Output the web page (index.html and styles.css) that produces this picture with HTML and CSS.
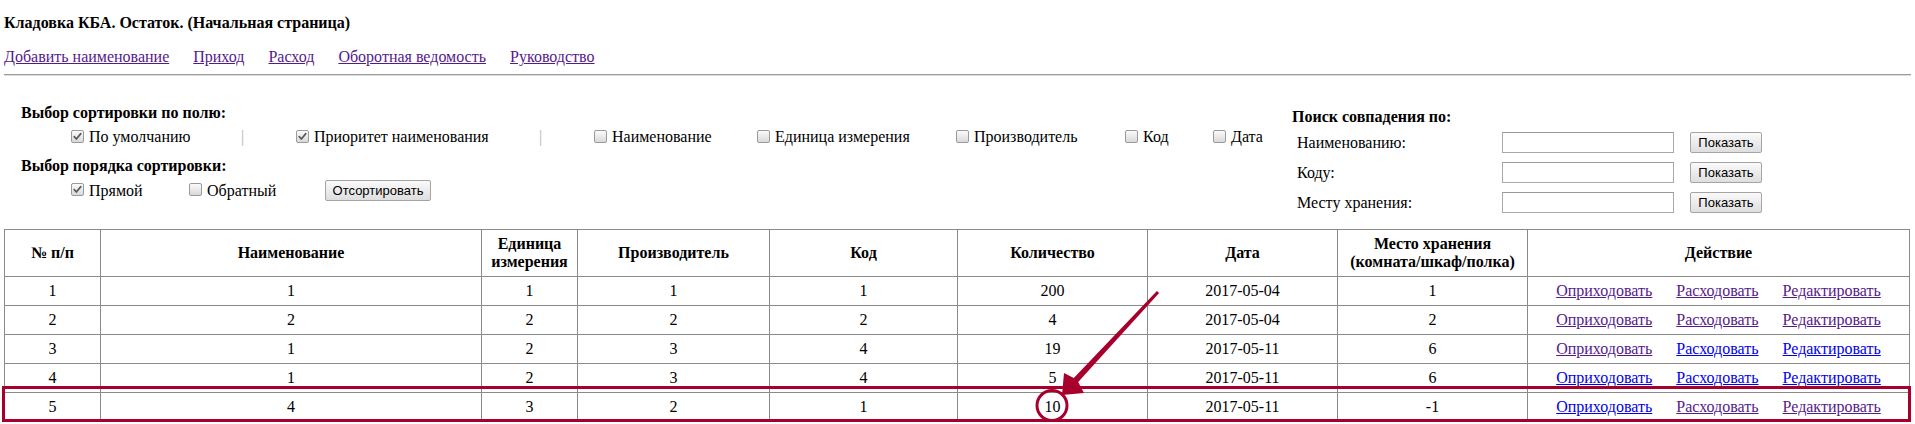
FILE: index.html
```html
<!DOCTYPE html>
<html lang="ru">
<head>
<meta charset="utf-8">
<title>Кладовка КБА</title>
<link rel="stylesheet" href="styles.css">
</head>
<body>
<div class="page">
  <div class="title">Кладовка КБА. Остаток. (Начальная страница)</div>
  <nav class="nav">
    <a class="v" href="#">Добавить наименование</a>
    <a class="v" href="#">Приход</a>
    <a class="v" href="#">Расход</a>
    <a class="v" href="#">Оборотная ведомость</a>
    <a class="v" href="#">Руководство</a>
  </nav>
  <div class="rule"></div>

  <div class="controls">
    <div class="sort">
      <div class="heading">Выбор сортировки по полю:</div>
      <div class="fields">
        <span class="opt"><span class="cb"><svg viewBox="0 0 11 11"><path d="M2.2 5.6 L4.4 8 L8.8 2.6"/></svg></span>По умолчанию</span>
        <span class="sep">|</span>
        <span class="opt"><span class="cb"><svg viewBox="0 0 11 11"><path d="M2.2 5.6 L4.4 8 L8.8 2.6"/></svg></span>Приоритет наименования</span>
        <span class="sep">|</span>
        <span class="opt"><span class="cb"></span>Наименование</span>
        <span class="opt"><span class="cb"></span>Единица измерения</span>
        <span class="opt"><span class="cb"></span>Производитель</span>
        <span class="opt"><span class="cb"></span>Код</span>
        <span class="opt"><span class="cb"></span>Дата</span>
      </div>
      <div class="heading heading2">Выбор порядка сортировки:</div>
      <div class="order">
        <span class="opt"><span class="cb"><svg viewBox="0 0 11 11"><path d="M2.2 5.6 L4.4 8 L8.8 2.6"/></svg></span>Прямой</span>
        <span class="opt"><span class="cb"></span>Обратный</span>
        <button class="btn btn-sort" type="button">Отсортировать</button>
      </div>
    </div>

    <div class="search">
      <div class="heading">Поиск совпадения по:</div>
      <div class="search-grid">
        <span class="lbl">Наименованию:</span>
        <input class="inp" type="text">
        <button class="btn btn-show" type="button">Показать</button>
        <span class="lbl">Коду:</span>
        <input class="inp" type="text">
        <button class="btn btn-show" type="button">Показать</button>
        <span class="lbl">Месту хранения:</span>
        <input class="inp" type="text">
        <button class="btn btn-show" type="button">Показать</button>
      </div>
    </div>
  </div>

  <table class="stock">
    <colgroup>
      <col class="c-num"><col class="c-name"><col class="c-unit"><col class="c-maker"><col class="c-code"><col class="c-qty"><col class="c-date"><col class="c-place"><col class="c-act">
    </colgroup>
    <thead>
      <tr>
        <th>№ п/п</th>
        <th>Наименование</th>
        <th>Единица измерения</th>
        <th>Производитель</th>
        <th>Код</th>
        <th>Количество</th>
        <th>Дата</th>
        <th>Место хранения (комната/шкаф/полка)</th>
        <th>Действие</th>
      </tr>
    </thead>
    <tbody>
      <tr>
        <td>1</td><td>1</td><td>1</td><td>1</td><td>1</td><td>200</td><td>2017-05-04</td><td>1</td>
        <td><div class="acts"><a class="v" href="#">Оприходовать</a><a class="v" href="#">Расходовать</a><a class="v" href="#">Редактировать</a></div></td>
      </tr>
      <tr>
        <td>2</td><td>2</td><td>2</td><td>2</td><td>2</td><td>4</td><td>2017-05-04</td><td>2</td>
        <td><div class="acts"><a class="v" href="#">Оприходовать</a><a class="v" href="#">Расходовать</a><a class="v" href="#">Редактировать</a></div></td>
      </tr>
      <tr>
        <td>3</td><td>1</td><td>2</td><td>3</td><td>4</td><td>19</td><td>2017-05-11</td><td>6</td>
        <td><div class="acts"><a class="v" href="#">Оприходовать</a><a class="u" href="#">Расходовать</a><a class="u" href="#">Редактировать</a></div></td>
      </tr>
      <tr>
        <td>4</td><td>1</td><td>2</td><td>3</td><td>4</td><td>5</td><td>2017-05-11</td><td>6</td>
        <td><div class="acts"><a class="u" href="#">Оприходовать</a><a class="u" href="#">Расходовать</a><a class="u" href="#">Редактировать</a></div></td>
      </tr>
      <tr>
        <td>5</td><td>4</td><td>3</td><td>2</td><td>1</td><td>10</td><td>2017-05-11</td><td>-1</td>
        <td><div class="acts"><a class="u" href="#">Оприходовать</a><a class="v" href="#">Расходовать</a><a class="v" href="#">Редактировать</a></div></td>
      </tr>
    </tbody>
  </table>
</div>

<svg class="annot" width="1915" height="424" viewBox="0 0 1915 424">
  <rect x="3.5" y="387.5" width="1906" height="33" fill="none" stroke="#a8002c" stroke-width="3"/>
  <circle cx="1052" cy="405.5" r="15" fill="none" stroke="#a8002c" stroke-width="3"/>
  <polygon fill="#a8002c" points="1156.9,291 1159.1,293 1078.2,382.1 1084,393 1062,395 1064,373 1073.8,377.9"/>
</svg>
</body>
</html>
```

FILE: styles.css
```css
html, body {
  margin: 0;
  padding: 0;
  background: #ffffff;
}

body {
  position: relative;
  width: 1915px;
  height: 424px;
  overflow: hidden;
  font-family: "Liberation Serif", "Times New Roman", serif;
  font-size: 16px;
  color: #000000;
}

.page {
  padding: 14px 4px 0 4px;
}

a {
  text-decoration: underline;
}

a.v {
  color: #551a8b;
}

a.u {
  color: #0000ee;
}

.title {
  font-weight: bold;
  line-height: 18px;
  height: 18px;
}

.nav {
  margin-top: 16px;
  display: flex;
  gap: 24px;
  line-height: 18px;
  height: 18px;
}

.rule {
  margin-top: 8px;
  height: 0;
  width: 1907px;
  border-top: 1px solid #9c9c9c;
  border-bottom: 1px solid #dcdcdc;
}

.controls {
  margin-top: 28px;
  display: flex;
  align-items: flex-start;
}

.sort {
  width: 1288px;
  padding-left: 17px;
  box-sizing: border-box;
}

.heading {
  font-weight: bold;
  line-height: 18px;
  height: 18px;
}

.heading2 {
  margin-top: 11px;
}

.fields {
  margin-top: 6px;
  padding-left: 50px;
  display: grid;
  grid-template-columns: 170px 55px 243px 55px 163px 199px 169px 88px auto;
  align-items: center;
  line-height: 18px;
  height: 18px;
}

.order {
  margin-top: 5px;
  padding-left: 50px;
  display: grid;
  grid-template-columns: 118px 136px auto;
  align-items: center;
  height: 21px;
  line-height: 18px;
}

.opt {
  display: flex;
  align-items: center;
  white-space: nowrap;
}

.cb {
  display: inline-block;
  flex: none;
  width: 13px;
  height: 13px;
  box-sizing: border-box;
  margin-right: 5px;
  border: 1px solid #9a9a9a;
  border-radius: 2px;
  background: linear-gradient(#fbfbfb, #d9d9d9);
  position: relative;
  top: -1px;
}

.cb svg {
  display: block;
  width: 11px;
  height: 11px;
}

.cb svg path {
  fill: none;
  stroke: #5a5a5a;
  stroke-width: 1.7;
  stroke-linecap: round;
  stroke-linejoin: round;
}

.sep {
  color: #b4b4b4;
}

.btn {
  height: 21px;
  box-sizing: border-box;
  padding: 0;
  margin: 0;
  font-family: "Liberation Sans", Arial, sans-serif;
  font-size: 13px;
  color: #000000;
  border: 1px solid #a4a4a4;
  border-radius: 2px;
  background: linear-gradient(#fafafa, #dedede);
  justify-self: start;
}

.btn-sort {
  width: 106px;
}

.btn-show {
  width: 72px;
}

.search {
  padding-top: 4px;
}

.search .heading {
  height: 18px;
}

.search-grid {
  margin-top: 6px;
  padding-left: 5px;
  display: grid;
  grid-template-columns: 189px 172px 72px;
  column-gap: 16px;
  row-gap: 9px;
  align-items: center;
}

.lbl {
  line-height: 18px;
}

.inp {
  width: 172px;
  height: 21px;
  box-sizing: border-box;
  margin: 0;
  padding: 0 3px;
  border: 1px solid #a9a9a9;
  border-top-color: #9a9a9a;
  background: #ffffff;
  font-family: "Liberation Serif", serif;
  font-size: 14px;
}

.stock {
  margin-top: 16px;
  width: 1905px;
  table-layout: fixed;
  border-collapse: collapse;
}

.stock th,
.stock td {
  border: 1px solid #8a8a8a;
  padding: 0 2px;
  text-align: center;
  vertical-align: middle;
  line-height: 18px;
}

.stock th {
  height: 46px;
  font-weight: bold;
}

.stock td {
  height: 28px;
}

.c-num { width: 96px; }
.c-name { width: 381px; }
.c-unit { width: 96px; }
.c-maker { width: 192px; }
.c-code { width: 188px; }
.c-qty { width: 190px; }
.c-date { width: 190px; }
.c-place { width: 190px; }
.c-act { width: 382px; }

.acts {
  display: flex;
  justify-content: center;
  gap: 24px;
  white-space: nowrap;
}

.annot {
  position: absolute;
  left: 0;
  top: 0;
  pointer-events: none;
}
```
